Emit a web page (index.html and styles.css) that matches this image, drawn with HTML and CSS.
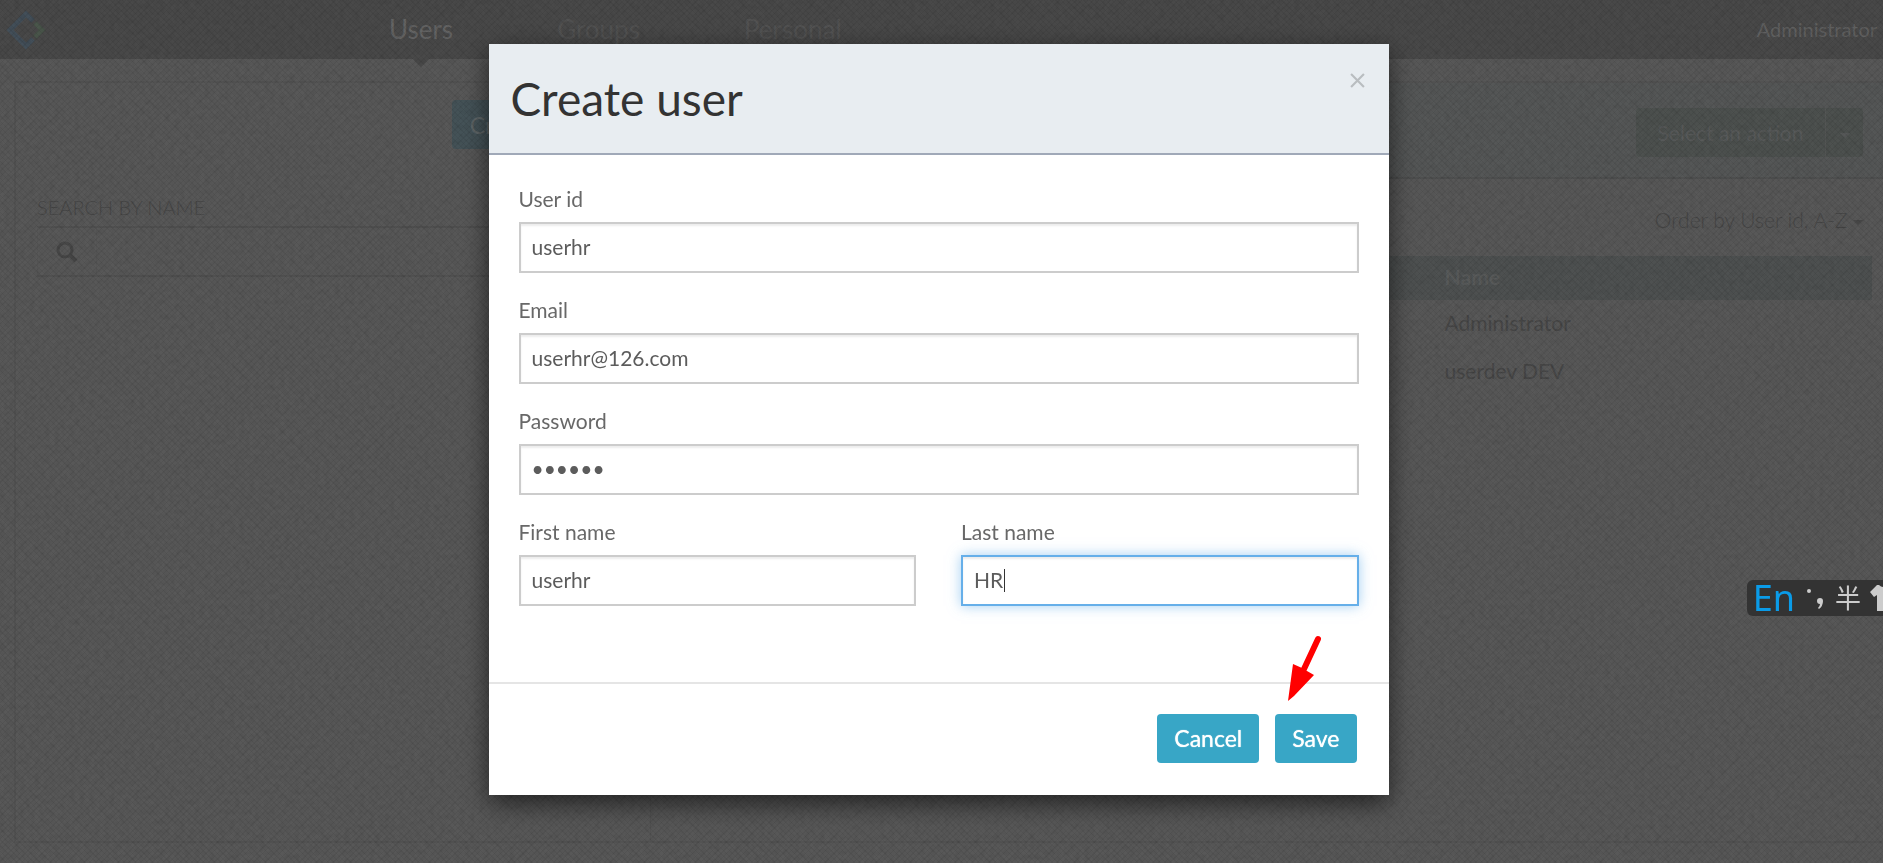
FILE: index.html
```html
<!DOCTYPE html>
<html lang="en">
<head>
<meta charset="utf-8">
<title>Create user</title>
<link rel="stylesheet" href="styles.css">
</head>
<body>
<div class="app">
  <header class="topbar">
    <svg class="logo" viewBox="0 0 40 40" aria-hidden="true" fill="none" stroke-width="5">
      <path d="M27 11 20 4 4 20 20 36 27 29" stroke="#434f59"/>
      <path d="M29 13 36 20 29 27" stroke="#4a564b"/>
    </svg>
    <nav class="nav">
      <a class="nav-link active" href="#">Users</a>
      <a class="nav-link" href="#">Groups</a>
      <a class="nav-link" href="#">Personal</a>
    </nav>
    <a class="account" href="#">Administrator</a>
  </header>
  <main class="panel">
    <aside class="sidebar">
      <div class="side-head"><button class="create" type="button">Create user</button></div>
      <label class="search-label" for="search">SEARCH BY NAME</label>
      <div class="search">
        <svg class="search-icon" viewBox="0 0 22 22" aria-hidden="true" fill="none" stroke="#474747" stroke-width="3"><circle cx="9" cy="9" r="7"/><path d="m14 14 6 6" stroke-width="4"/></svg>
        <input id="search" class="search-input" type="text">
      </div>
    </aside>
    <section class="content">
      <div class="actions">
        <button class="select-action" type="button">Select an action</button>
        <button class="action-caret" type="button" aria-label="Open actions"><span class="caret"></span></button>
      </div>
      <button class="order" type="button">Order by User id, A-Z <span class="caret"></span></button>
      <table class="users">
        <thead><tr><th>Name</th></tr></thead>
        <tbody><tr><td>Administrator</td></tr><tr><td>userdev DEV</td></tr></tbody>
      </table>
    </section>
  </main>
</div>

<div class="backdrop">
  <svg class="grain" aria-hidden="true">
    <filter id="grain"><feTurbulence type="fractalNoise" baseFrequency="0.2" numOctaves="2" seed="4"/><feColorMatrix values="0 0 0 0 0  0 0 0 0 0  0 0 0 0 0  1 0 0 0 -0.35"/></filter>
    <rect width="100%" height="100%" filter="url(#grain)"/>
  </svg>
  <form class="modal" role="dialog" aria-labelledby="modal-title">
    <div class="modal-header">
      <h1 class="modal-title" id="modal-title">Create user</h1>
      <button class="close" type="button" aria-label="Close"><svg class="close-icon" viewBox="0 0 14 14" fill="none" stroke="#b9bdc0" stroke-width="2"><path d="m1 1 12 12M13 1 1 13"/></svg></button>
    </div>
    <div class="modal-body">
      <div class="field"><label for="uid">User id</label><input id="uid" type="text" value="userhr"></div>
      <div class="field"><label for="email">Email</label><input id="email" type="text" value="userhr@126.com"></div>
      <div class="field"><label for="pw">Password</label><input id="pw" type="password" value="secret"></div>
      <div class="field half"><label for="first">First name</label><input id="first" type="text" value="userhr"></div>
      <div class="field half"><label for="last">Last name</label>
        <div class="focus-wrap"><input id="last" class="focused" type="text" value="HR"><span class="cursor"></span></div></div>
    </div>
    <div class="modal-footer">
      <button class="btn" type="button">Cancel</button>
      <button class="btn" type="submit">Save</button>
      <svg class="arrow" viewBox="0 0 36 68" aria-hidden="true"><path d="M31 4 17 34" stroke="#f00" stroke-width="6" stroke-linecap="round"/><path d="M6 29 15 33 20 36 27 40 7 61 1 66Z" fill="#f00"/></svg>
    </div>
  </form>
</div>

<div class="ime">
  <span class="ime-lang">En</span>
  <svg class="ime-punct" viewBox="0 0 20 26" aria-hidden="true" fill="#ccc"><circle cx="4" cy="6" r="2"/><path d="M12 16a3 3 0 1 1 6 0q0 5-4 8l-1-1q2-2 2-4-3 0-3-3z"/></svg>
  <span class="ime-width">半</span>
  <svg class="ime-skin" viewBox="0 0 26 26" aria-hidden="true"><path d="M0 7 7 0h2q4 4 8 0h2l7 7-4 5-3-2v16H7V10l-3 2z" fill="#ccc"/></svg>
</div>
</body>
</html>
```
FILE: styles.css
```css
* { box-sizing: border-box; }
body {
  margin: 0;
  min-height: 100vh;
  background: #585858;
  font-family: Lato, "Noto Sans CJK SC", sans-serif;
  font-size: 21px;
  font-weight: 400;
  color: #474747;
  overflow: hidden;
}
button, input { font: inherit; color: inherit; }
a { color: inherit; text-decoration: none; }

/* Page behind the dialog */
.app { min-height: 100vh; display: flex; flex-direction: column; }
.topbar {
  display: flex;
  align-items: center;
  height: 59px;
  background: #494949;
  padding-left: 6px;
  padding-right: 6px;
}
.logo { width: 40px; height: 40px; }
.nav { display: flex; gap: 104px; margin-left: 343px; font-size: 26px; color: #535353; }
.nav-link { line-height: 57px; }
.nav-link.active { position: relative; color: #646464; }
.nav-link.active::after {
  content: "";
  position: absolute;
  left: 50%;
  top: 100%;
  margin-left: -9px;
  border: 9px solid transparent;
  border-top-color: #494949;
  border-bottom: 0;
}
.account { margin-left: auto; color: #606060; font-size: 20px; line-height: 57px; }
.panel {
  flex: 1;
  display: flex;
  margin: 22px 0 20px 14px;
  border: 2px solid #535353;
  border-right: 0;
}
.sidebar { width: 34%; padding: 17px 21px; border-right: 1px solid #535353; }
.side-head { display: flex; justify-content: flex-end; margin-right: 25px; }
.create { height: 49px; padding: 0 18px; border: 0; border-radius: 4px; background: #455358; color: #606769; font-size: 23px; }
.search-label { display: block; margin-top: 44px; line-height: 28px; font-size: 20px; font-weight: 300; }
.search { display: flex; align-items: center; height: 51px; margin-top: 5px; border: 2px solid #515151; border-left: 1px solid #555; }
.search-icon { width: 22px; height: 22px; margin: 0 18px; }
.search-input { flex: 1; height: 47px; border: 0; border-left: 1px solid #555; background: transparent; }
.content { flex: 1; }
.actions { display: flex; justify-content: flex-end; padding: 25px 20px 20px; border-bottom: 2px solid #4f5050; background: #555757; }
.select-action, .action-caret { height: 49px; border: 0; background: #4d514f; color: #585a5a; }
.select-action { width: 189px; padding: 0; border-radius: 4px 0 0 4px; }
.action-caret { width: 38px; border-left: 1px solid #555756; border-radius: 0 4px 4px 0; }
.order { display: block; margin: 26px 20px 21px auto; padding: 0; border: 0; background: none; line-height: 30px; font-weight: 300; }
.caret { display: inline-block; border: 5px solid transparent; border-top-color: currentColor; border-bottom: 0; vertical-align: middle; }
.users { width: calc(100% - 11px); border-collapse: collapse; text-align: left; }
.users th { height: 44px; background: #4e5151; color: #595b5b; font-weight: 700; }
.users th, .users td { padding: 0 0 3px 65%; }
.users td { height: 48px; }

/* Dialog */
.backdrop {
  position: fixed;
  inset: 0;
  padding-top: 44px;
  background:
    repeating-linear-gradient(45deg, rgba(0, 0, 0, .05) 0 1px, transparent 1px 4px),
    repeating-linear-gradient(-45deg, rgba(0, 0, 0, .05) 0 1px, transparent 1px 4px);
}
.grain { position: absolute; inset: 0; width: 100%; height: 100%; opacity: .14; }
.modal {
  position: relative;
  width: 900px;
  max-width: 96%;
  margin: 0 auto;
  left: -3px;
  background: #fff;
  box-shadow: 0 8px 24px rgba(0, 0, 0, .6);
}
.modal-header {
  display: flex;
  justify-content: space-between;
  align-items: flex-start;
  padding: 22px;
  background: #e8edf1;
  border-bottom: 2px solid #a0a9b8;
}
.modal-title { margin: 0; font-size: 46px; line-height: 65px; font-weight: 400; color: #333; }
.close { padding: 7px 2px; border: 0; background: none; line-height: 0; }
.close-icon { width: 15px; height: 15px; }
.modal-body { display: flex; flex-wrap: wrap; gap: 22px 45px; padding: 29px 30px 76px; color: #686868; }
.field { flex: 1 0 100%; }
.field.half { flex: 1 0 40%; }
.field label { display: block; line-height: 30px; margin-bottom: 8px; }
.field input {
  display: block;
  width: 100%;
  height: 51px;
  padding: 0 11px 2px;
  border: 2px solid #ccc;
  border-radius: 0;
  background: #fff;
  box-shadow: inset 0 2px 2px rgba(0, 0, 0, .075);
  outline: none;
  color: #5c5c5c;
}
.field .focused { border-color: #66afe9; box-shadow: inset 0 2px 2px rgba(0, 0, 0, .075), 0 0 12px rgba(102, 175, 233, .6); }
.focus-wrap { position: relative; }
.cursor { position: absolute; left: 43px; top: 14px; width: 1px; height: 23px; background: #333; }
.modal-footer {
  position: relative;
  display: flex;
  justify-content: flex-end;
  gap: 16px;
  padding: 30px 32px 32px;
  border-top: 2px solid #e5e5e5;
}
.btn { height: 49px; padding: 0 17px 2px; border: 0; border-radius: 4px; background: #38a6c6; color: #fff; font-size: 23px; text-shadow: 0 0 1px #fff; }
.arrow { position: absolute; right: 66px; top: -49px; width: 36px; height: 68px; }

/* Input method bar */
.ime {
  position: fixed;
  right: -13px;
  top: 580px;
  display: flex;
  align-items: center;
  height: 36px;
  padding-left: 6px;
  border-radius: 6px 0 0 6px;
  background: #333;
  color: #ccc;
}
.ime-lang { color: #0a9be8; font-family: "Noto Sans", sans-serif; font-size: 36px; line-height: 36px; }
.ime-punct { width: 20px; height: 26px; margin: 0 10px; }
.ime-width { font-size: 26px; line-height: 36px; margin-right: 9px; }
.ime-skin { width: 26px; height: 26px; }
```
